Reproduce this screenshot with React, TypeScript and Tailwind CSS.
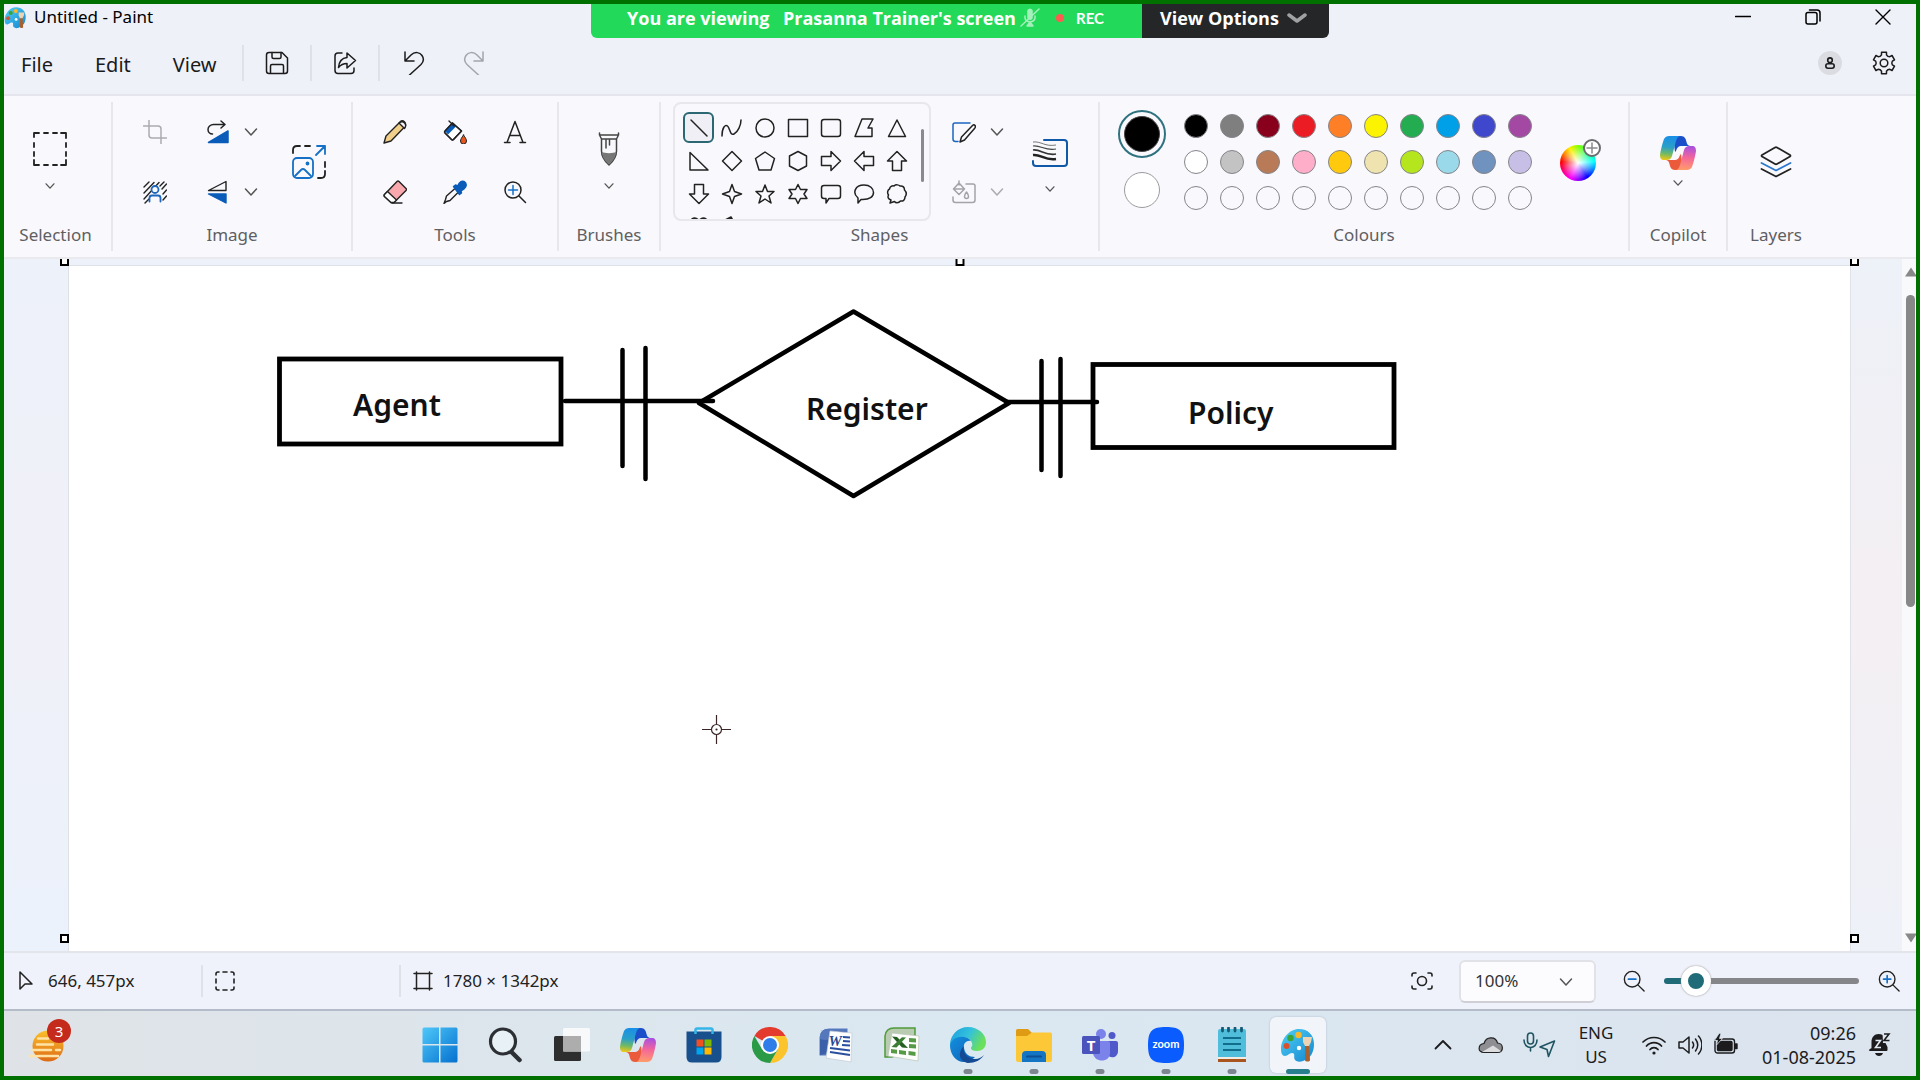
import React from "react";

type P = { children: React.ReactNode; size?: number; vb?: string; cls?: string; sw?: number };

function Icon({ children, size = 24, vb = "0 0 24 24", cls = "", sw = 1.3 }: P) {
  return (
    <svg
      width={size}
      height={size}
      viewBox={vb}
      fill="none"
      stroke="currentColor"
      strokeWidth={sw}
      strokeLinecap="round"
      strokeLinejoin="round"
      className={"shrink-0 " + cls}
      aria-hidden="true"
    >
      {children}
    </svg>
  );
}

function Chevron({ small = false, cls = "text-[#555]" }: { small?: boolean; cls?: string }) {
  return (
    <Icon size={small ? 10 : 14} vb="0 0 14 14" sw={small ? 1.9 : 1.5} cls={cls}>
      <path d="M1.5 4l5.5 6 5.5-6" />
    </Icon>
  );
}

function Btn({ label, cls, children }: { label: string; cls: string; children: React.ReactNode }) {
  return (
    <button type="button" aria-label={label} className={"flex shrink-0 items-center justify-center " + cls}>
      {children}
    </button>
  );
}

function Group({ label, cls, labelCls = "", children }: { label: string; cls: string; labelCls?: string; children: React.ReactNode }) {
  return (
    <section aria-label={label} className={"my-1.5 flex shrink-0 flex-col border-r-2 border-[#e7e7ec] pb-1 " + cls}>
      <div className="flex h-[120px]">{children}</div>
      <div className={"mt-px text-center text-[17px] leading-6 text-[#5f5f63] " + labelCls}>{label}</div>
    </section>
  );
}

function PaintLogo({ size }: { size: number }) {
  return (
    <svg width={size} height={size} viewBox="0 0 36 36" aria-hidden="true" className="shrink-0">
      <defs>
        <linearGradient id="pal" x1="0" y1="0" x2="1" y2="1">
          <stop offset="0" stopColor="#4fd0f5" />
          <stop offset="1" stopColor="#1486d0" />
        </linearGradient>
      </defs>
      <path
        d="M19 2C9 2 1 12 1 22c0 4 1 7 4 7s4-3 7-3c4 0 1 4 3 7 2 2 5 2 8 1 8-3 11-9 11-17C34 8 28 2 19 2z"
        fill="url(#pal)"
      />
      <circle cx="19" cy="21" r="2.2" fill="#fff" />
      <circle cx="6.5" cy="19" r="3" fill="#d9512c" />
      <circle cx="10.5" cy="11" r="3.2" fill="#3aa537" />
      <circle cx="18.5" cy="8" r="3.2" fill="#f7b82d" />
      <path d="M25 18h4l1 15c0 2-5 2-5 0z" fill="#a8602c" />
      <path d="M23 10h9l-1 5-2 4h-4l-2-4z" fill="#ecd3b4" />
    </svg>
  );
}

function Copilot({ id, w, h }: { id: string; w: number; h: number }) {
  const body = "M9 0h12c-3 0-4 2-5 5l-4 15c-1 3-3 4-5 4H4c-3 0-4-2-4-5C1 12 3 6 4 3 5 1 7 0 9 0z";
  const fold = "M13 0h8c3.5 0 5 3 5.5 6 .5 2.5 1.5 3.5 3.5 4h-8c-4 0-5 2-6 5l-1 1z";
  return (
    <svg width={w} height={h} viewBox="0 0 36 34" aria-hidden="true" className="shrink-0">
      <defs>
        <linearGradient id={id + "a"} x1="0.3" y1="0" x2="0.2" y2="1">
          <stop offset="0" stopColor="#1a8fe6" />
          <stop offset="0.45" stopColor="#2aa0c8" />
          <stop offset="0.72" stopColor="#6cb86a" />
          <stop offset="1" stopColor="#f2c813" />
        </linearGradient>
        <linearGradient id={id + "c"} x1="0.3" y1="0" x2="0.2" y2="1">
          <stop offset="0" stopColor="#ff9a6c" />
          <stop offset="0.5" stopColor="#f4669a" />
          <stop offset="1" stopColor="#a44fe4" />
        </linearGradient>
      </defs>
      <path d={fold} fill="#1b4fc9" />
      <path d={fold} fill="#ec5a3c" transform="rotate(180 18 17)" />
      <path d={body} fill={"url(#" + id + "a)"} />
      <path d={body} fill={"url(#" + id + "c)"} transform="rotate(180 18 17)" />
    </svg>
  );
}

function gearPath() {
  let d = "";
  const pt = (deg: number, r: number) => {
    const a = ((deg - 90) * Math.PI) / 180;
    return (12 + r * Math.cos(a)).toFixed(2) + " " + (12 + r * Math.sin(a)).toFixed(2);
  };
  for (let i = 0; i < 6; i++) {
    const a = i * 60;
    d += (i ? "L" : "M") + pt(a - 13, 11) + "L" + pt(a + 13, 11) + "L" + pt(a + 17, 8.6);
    d += "Q" + pt(a + 30, 7.2) + " " + pt(a + 43, 8.6);
  }
  return d + "Z";
}

const shapes: { name: string; d: string }[] = [
  { name: "Line", d: "M3 3l16 16" },
  { name: "Curve", d: "M1 19c0-8 3-12 5.5-10C9 11 9 19 13 17c4-2 7-9 7-14" },
  { name: "Oval", d: "M20 11a9 9 0 1 1-18 0 9 9 0 0 1 18 0z" },
  { name: "Rectangle", d: "M1.5 2.5h19v17h-19z" },
  { name: "Rounded rectangle", d: "M4 2.5h14q2.5 0 2.5 2.5v12q0 2.5-2.5 2.5H4q-2.5 0-2.5-2.5V5Q1.5 2.5 4 2.5z" },
  { name: "Polygon", d: "M9 2h11l-5 9h4v8.5H2z" },
  { name: "Triangle", d: "M11 3l8.5 16.5h-17z" },
  { name: "Right-angled triangle", d: "M2 2.5L20 20H2z" },
  { name: "Diamond", d: "M11 1.5l9.5 9.5-9.5 9.5L1.5 11z" },
  { name: "Pentagon", d: "M11 2l9.5 6.5L17 20H5L1.5 8.5z" },
  { name: "Hexagon", d: "M11 1.5l8.5 4.5v10L11 20.5 2.5 16V6z" },
  { name: "Right arrow", d: "M1.5 6.5H11v-5l9.5 9.5-9.5 9.5v-5H1.5z" },
  { name: "Left arrow", d: "M20.5 6.5H11v-5L1.5 11l9.5 9.5v-5h9.5z" },
  { name: "Up arrow", d: "M6.5 20.5V11h-5L11 1.5l9.5 9.5h-5v9.5z" },
  { name: "Down arrow", d: "M6.5 1.5V11h-5l9.5 9.5L20.5 11h-5V1.5z" },
  { name: "Four-point star", d: "M11 1.5l2.5 7 7 2.5-7 2.5-2.5 7-2.5-7-7-2.5 7-2.5z" },
  { name: "Five-point star", d: "M11 2l2.5 6.5h6.5l-5 4.5 2 7-6-4-6 4 2-7-5-4.5h6.5z" },
  { name: "Six-point star", d: "M11 1.5l2.5 5h6.5L17 11l3 4.5h-6.5l-2.5 5-2.5-5H2L5 11 2 6.5h6.5z" },
  { name: "Rounded callout", d: "M4 2.5h14q2.5 0 2.5 2.5v8q0 2.5-2.5 2.5H9L6 20v-4.5H4Q1.5 15.5 1.5 13V5Q1.5 2.5 4 2.5z" },
  { name: "Oval callout", d: "M8 16.5l-3 3.5v-5C-1 10 2 2 11 2c6 0 9.5 3.5 9.5 7.5S17 17 8 16.5z" },
  { name: "Cloud callout", d: "M8 3c2-2 5-1 6 0 3-.5 4.5 1.5 4.5 4 2 2 2 5 .5 7 0 3-2 4.5-4.5 4-2 2.5-5 2-6 .5L4 20l1-3c-3-1-3.5-3-2.5-5-1.5-2-1-5 1-6C4 3.5 6 2.5 8 3z" },
  { name: "Heart", d: "M11 20L2.5 11C-1 5 6-1 11 4.5 16-1 23 5 19.5 11z" },
  { name: "Lightning", d: "M2 5l8-4 3 5-2 1 5 5-2 1 6 7-10-5 2-1-6-5 2-1z" },
];

const row1 = ["bg-black", "bg-[#7f7f7f]", "bg-[#88001b]", "bg-[#ec1c24]", "bg-[#ff7f27]", "bg-[#fbf300]", "bg-[#23ad50]", "bg-[#00a0e8]", "bg-[#3f48cc]", "bg-[#a349a4]"];
const row2 = ["bg-white", "bg-[#c3c3c3]", "bg-[#b97a57]", "bg-[#ffaec9]", "bg-[#ffc90e]", "bg-[#efe4b0]", "bg-[#b5e61d]", "bg-[#99d9ea]", "bg-[#7092be]", "bg-[#c8bfe7]"];
const row3 = Array<string>(10).fill("bg-transparent");
const palette = [...row1, ...row2, ...row3];

function TitleBar() {
  return (
    <header className="flex h-7 items-center pb-0.5">
      <div className="w-[30px]">
        <PaintLogo size={23} />
      </div>
      <h1 className="flex-1 text-[17px] leading-6 text-black">Untitled - Paint</h1>
      <Btn label="Minimise" cls="h-6 w-[66px] text-black">
        <Icon size={16} vb="0 0 16 16"><path d="M.5 7.5h15" /></Icon>
      </Btn>
      <Btn label="Restore" cls="h-6 w-[74px] text-black">
        <Icon size={16} vb="0 0 16 16" sw={1.5}>
          <rect x="1" y="3.5" width="11" height="11.5" rx="2" />
          <path d="M4.5 1h7.5q3 0 3 3v8" />
        </Icon>
      </Btn>
      <Btn label="Close" cls="h-6 w-[66px] text-black">
        <Icon size={16} vb="0 0 16 16" sw={1.4}><path d="M1 1l14 14M15 1L1 15" /></Icon>
      </Btn>
    </header>
  );
}

function MenuBar() {
  return (
    <nav className="flex h-[62px] items-center text-[#1b1b1b]">
      <div className="flex w-[238px] gap-[42px] pt-1 pl-[17px] text-[20px] leading-7">
        <button type="button">File</button>
        <button type="button">Edit</button>
        <button type="button">View</button>
      </div>
      <div className="h-9 w-0.5 bg-[#dfe1ea]" />
      <Btn label="Save" cls="h-10 w-[66px]">
        <Icon sw={1.5}>
          <path d="M4 1.5h13L22.5 7v13q0 2.5-2.5 2.5H4q-2.5 0-2.5-2.5V4Q1.5 1.5 4 1.5z" />
          <path d="M7 1.5V6q0 1.5 1.5 1.5h6Q16 7.5 16 6V1.5M5.5 22v-7q0-1.5 1.5-1.5h10q1.5 0 1.5 1.5v7" />
        </Icon>
      </Btn>
      <div className="h-9 w-0.5 bg-[#dfe1ea]" />
      <Btn label="Share" cls="h-10 w-[66px]">
        <Icon sw={1.5}>
          <path d="M9 2H5Q2 2 2 5v14.5q0 3 3 3h13q3 0 3-3V17" />
          <path d="M14 2l8.5 7.5L14 17v-4.5c-4 0-6.5 1.5-8.5 4C6 11 9 7 14 6.5z" />
        </Icon>
      </Btn>
      <div className="h-9 w-0.5 bg-[#dfe1ea]" />
      <Btn label="Undo" cls="ml-1 h-10 w-[60px]">
        <Icon sw={1.5}><path d="M3 1v9h9M3 10l6-6c4-4 9-2.5 11 .5 2 3 1.5 6.5-1 9L7.5 24" /></Icon>
      </Btn>
      <Btn label="Redo" cls="h-10 w-[60px] text-[#a4a5ac]">
        <Icon sw={1.5}><path d="M21 1v9h-9M21 10l-6-6c-4-4-9-2.5-11 .5-2 3-1.5 6.5 1 9L16.5 24" /></Icon>
      </Btn>
      <div className="flex-1" />
      <Btn label="Account" cls="h-6 w-6 rounded-full bg-[#dadce2]">
        <Icon size={12} vb="0 0 12 12" sw={1.6}>
          <circle cx="6" cy="3.2" r="2.3" />
          <rect x="1.8" y="6.8" width="8.4" height="4.4" rx="2.2" />
        </Icon>
      </Btn>
      <Btn label="Settings" cls="mr-1.5 ml-4 h-10 w-[52px]">
        <Icon sw={1.5}>
          <path d={gearPath()} />
          <circle cx="12" cy="12" r="3.8" />
        </Icon>
      </Btn>
    </nav>
  );
}

function Ribbon() {
  return (
    <div className="flex border-y-2 border-t-[#e5e5ee] border-b-[#e9e9ee] bg-[#f9f8fc] text-[#222]">
      <Group label="Selection" cls="w-[109px]" labelCls="pr-1">
        <button type="button" aria-label="Selection" className="ml-4 flex w-[60px] flex-col items-center pt-[30px]">
          <Icon size={34} vb="0 0 34 34" sw={1.8}>
            <path d="M1 5V1h5M11 1h4M20 1h4M28 1h5v5M33 11v4M33 20v4M33 28v5h-5M24 33h-4M15 33h-4M6 33H1v-5M1 24v-4M1 15v-4" />
          </Icon>
          <span className="mt-[15px]"><Chevron small /></span>
        </button>
      </Group>

      <Group label="Image" cls="w-[240px]">
        <div className="ml-3 grid grid-rows-2 items-center">
          <Btn label="Crop" cls="h-10 w-[60px] text-[#aaabb0]">
            <Icon sw={1.5}><path d="M6 .5V15q0 3 3 3h14.5M.5 6H15q3 0 3 3v14.5" /></Icon>
          </Btn>
          <Btn label="Remove background" cls="h-10 w-[60px]">
            <Icon sw={1.4}>
              <path d="M1 7l5-5M1 13L11 2.5M1 19L16 2.5M2 23l4-4M17 6l4-4M19 9l4.5-5M20 14l3.5-4M20 20l3.5-4" />
              <g stroke="#1d66bd" strokeWidth="1.8" fill="#f9f8fc">
                <circle cx="12" cy="9.5" r="3.5" />
                <path d="M6.5 21.5V18q0-2.5 2.5-2.5h6q2.5 0 2.5 2.5v3.5" />
              </g>
            </Icon>
          </Btn>
        </div>
        <div className="ml-2 grid grid-rows-2 items-center">
          <Btn label="Rotate" cls="h-10 w-[50px]">
            <Icon sw={1.5}>
              <path d="M15 1l4 3.5L15 8M18.5 4.5H7.5C4.5 4.5 2 7 2 9.5S4 14 6.5 14" />
              <path d="M2.5 22.5L22 11v11.5z" fill="#0a5cb8" stroke="#0a5cb8" />
            </Icon>
          </Btn>
          <Btn label="Flip" cls="h-10 w-[50px]">
            <Icon sw={1.4}>
              <path d="M2.5 10.5L20 1.5v9z" />
              <path d="M2.5 14H20v9z" fill="#0a5cb8" stroke="#0a5cb8" />
            </Icon>
          </Btn>
        </div>
        <div className="grid grid-rows-2 items-center">
          <Btn label="Rotate options" cls="h-10 w-4"><Chevron /></Btn>
          <Btn label="Flip options" cls="h-10 w-4"><Chevron /></Btn>
        </div>
        <Btn label="Resize" cls="ml-6 h-[120px] w-[52px]">
          <Icon size={34} vb="0 0 34 34" sw={1.8}>
            <path d="M1 8V5q0-4 4-4h3M13 1h5M33 17v5M33 26v3q0 4-4 4h-3" />
            <g stroke="#1670c6">
              <path d="M25 1h8v8M33 1l-9 9" />
              <rect x="1" y="13" width="20" height="20" rx="4" />
              <path d="M3 31l6-6q2-2 4 0l6 6" />
              <circle cx="15.5" cy="18.5" r="1" />
            </g>
          </Icon>
        </Btn>
      </Group>

      <Group label="Tools" cls="w-[206px]">
        <div className="mx-auto grid grid-cols-3 grid-rows-2">
          <Btn label="Pencil" cls="h-[60px] w-[60px]">
            <Icon sw={1.4}>
              <path d="M1 23l2-7L17 2c3-3 7 1 5 4.5L8 21z" fill="#f0d08a" />
              <path d="M16 3l5.5 5.5c3-4-1-9-5.5-5.5z" fill="#f9f8fc" />
            </Icon>
          </Btn>
          <Btn label="Fill" cls="h-[60px] w-[60px]">
            <Icon sw={1.4}>
              <path d="M9.5 3L2 11q-1 1 0 2l6.5 6.5q1 1 2 0L18.5 11z" fill="#fff" />
              <path d="M9.5 3L2 11l3 3.5 8-8z" fill="#0a5cb8" stroke="none" />
              <path d="M9.5 3L2 11q-1 1 0 2l6.5 6.5q1 1 2 0L18.5 11z M6 1l5 5" />
              <path d="M20.5 15c2 3 3 4.5 3 6a3 3 0 0 1-6 0c0-1.5 1-3 3-6z" fill="#e8551f" strokeWidth="1" />
            </Icon>
          </Btn>
          <Btn label="Text" cls="h-[60px] w-[60px]">
            <Icon sw={1.5}><path d="M4 22.5L12 1.5l8 21M7 15.5h10M1.5 22.5h5.5M17 22.5h5.5" /></Icon>
          </Btn>
          <Btn label="Eraser" cls="h-[60px] w-[60px]">
            <Icon sw={1.4}>
              <path d="M1.5 14.5L14 1.5q1-1 2 0L23 8.5q1 1 0 2L11 22.5H8l-6.5-6q-.8-1 0-2z" fill="#f9a8ae" />
              <path d="M1.5 14.5l3-3 9 8.5-2.5 2.5H8l-6.5-6q-.8-1 0-2z" fill="#fff" />
              <path d="M9 23h10" />
            </Icon>
          </Btn>
          <Btn label="Colour picker" cls="h-[60px] w-[60px]">
            <Icon sw={1.4}>
              <path d="M12 8.5l3.5 3.5L7 20.5l-3.5 1L1 23.5l1.5-4 1-3.5z" />
              <path d="M10.5 6.5l2-1.5 2 1C17 1 19 .5 21 1.5c3 1.5 3 5 0 7.5l-3 2 .5 2-2 1.5z" fill="#0a5cb8" stroke="#0a5cb8" />
            </Icon>
          </Btn>
          <Btn label="Magnifier" cls="h-[60px] w-[60px]">
            <Icon sw={1.5}>
              <circle cx="10" cy="10" r="8" />
              <path d="M16 16l6.5 6.5" />
              <path d="M10 5.5v9M5.5 10h9" stroke="#1670c6" />
            </Icon>
          </Btn>
        </div>
      </Group>

      <Group label="Brushes" cls="w-[102px]">
        <button type="button" aria-label="Brushes" className="mx-auto flex w-[60px] flex-col items-center pt-[30px]">
          <Icon size={34} vb="0 0 34 34" sw={1.5} cls="text-[#444]">
            <path d="M7.5 1v2l2 4h15l2-4V1M7.5 3h19M9.5 7v12c0 6 3 10 7.5 14 4.5-4 7.5-8 7.5-14V7M14 8v8M17.5 8v5" />
            <path d="M10 20c2 1.5 12 1.5 14 0 0 5-3 9-7 12.5-4-3.5-7-7.5-7-12.5z" fill="#777" stroke="none" />
          </Icon>
          <span className="mt-[15px]"><Chevron small /></span>
        </button>
      </Group>

      <Group label="Shapes" cls="w-[439px]">
        <div className="ml-3 flex h-[119px] w-[258px] shrink-0 overflow-hidden rounded-lg border-2 border-[#e8e7ec] pt-[7px] pl-[7px]">
          <div className="grid h-min grid-cols-7">
            {shapes.map((s, i) => (
              <button
                key={s.name}
                type="button"
                aria-label={s.name}
                className={
                  i === 0
                    ? "m-px flex h-[31px] w-[31px] items-center justify-center rounded-md border-2 border-[#2b6873] bg-[#f0eff5]"
                    : "flex h-[33px] w-[33px] items-center justify-center"
                }
              >
                <Icon size={22} vb="0 0 22 22" sw={1.5}><path d={s.d} /></Icon>
              </button>
            ))}
          </div>
          <div className="mt-[18px] ml-2 h-[53px] w-[3px] shrink-0 rounded-full bg-[#8b8b8e]" />
        </div>
        <div className="ml-[9px] grid grid-rows-2 items-center">
          <Btn label="Shape outline" cls="h-10 w-12">
            <Icon sw={1.5}>
              <path d="M18 3H3Q1 3 1 5v14q0 2.5 2.5 2.5H6" stroke="#1d66bd" />
              <path d="M8 22l1.5-5L20.5 5.5q1.5-1.5 2.5 0t-.5 3L12.5 20z" />
            </Icon>
          </Btn>
          <Btn label="Shape fill" cls="h-10 w-12 text-[#a3a3a8]">
            <Icon sw={1.5}>
              <path d="M7 1v4M7 3L1.5 9 7 14.5 12.5 9zM1.5 9h11M1 17v3q0 2.5 2.5 2.5h17q2.5 0 2.5-2.5V6q0-2-2-2h-7" />
              <path d="M14.5 12c1.5 2 2 3 2 4.5a2 2 0 0 1-4 0c0-1.5.5-2.5 2-4.5z" />
            </Icon>
          </Btn>
        </div>
        <div className="grid grid-rows-2 items-center">
          <Btn label="Outline options" cls="h-10 w-[18px]"><Chevron /></Btn>
          <Btn label="Fill options" cls="h-10 w-[18px]"><Chevron cls="text-[#aaabb0]" /></Btn>
        </div>
        <button type="button" aria-label="Size" className="ml-4 flex w-[56px] flex-col items-center pt-8">
          <svg width="36" height="36" viewBox="0 0 36 36" fill="none" aria-hidden="true">
            <path d="M12 6h20q3 0 3 3v20q0 3-3 3H4q-3 0-3-3v-2" stroke="#1058a8" strokeWidth="2" strokeLinecap="round" />
            <path d="M1 8c8-1 12 5 23 3" stroke="#555" strokeWidth="0.8" />
            <path d="M1 12c8-1 12 5 23 3" stroke="#444" strokeWidth="1.2" />
            <path d="M1 16c8-1 12 6 23 4" stroke="#333" strokeWidth="1.7" />
            <path d="M1 21c8-1 12 6 23 4" stroke="#222" strokeWidth="2.4" />
          </svg>
          <span className="mt-3.5"><Chevron small /></span>
        </button>
      </Group>

      <Group label="Colours" cls="w-[530px]">
        <div className="ml-[18px] flex w-12 shrink-0 flex-col items-center gap-3.5 pt-2">
          <button type="button" aria-label="Colour 1" className="h-12 w-12 rounded-full border-2 border-[#2f7280] p-1">
            <span className="block h-9 w-9 rounded-full border border-[#444] bg-black" />
          </button>
          <button type="button" aria-label="Colour 2" className="h-9 w-9 rounded-full border border-[#9b9b9f] bg-white" />
        </div>
        <div className="ml-[18px] grid h-min shrink-0 grid-cols-10 gap-3 pt-3">
          {palette.map((c, i) => (
            <button key={i} type="button" aria-label={"Swatch " + (i + 1)} className={"h-6 w-6 rounded-full border border-[#85858a] " + c} />
          ))}
        </div>
        <button type="button" aria-label="Edit colours" className="relative mt-[43px] ml-7 h-9 w-9 rounded-full bg-[conic-gradient(#8f0,#0f8_50deg,#0ff_85deg,#00f_145deg,#f0f_205deg,#f00_275deg,#ff8a00_305deg,#fe0_330deg,#8f0)]">
          <span className="block h-9 w-9 rounded-full bg-[radial-gradient(circle,#fff,transparent_65%)]" />
          <span className="absolute -top-1.5 left-[23px] flex h-[18px] w-[18px] items-center justify-center rounded-full border-2 border-[#6c6c70] bg-white text-[#8a8a8e]">
            <Icon size={12} vb="0 0 12 12" sw={1.5}><path d="M6 1v10M1 6h10" /></Icon>
          </span>
        </button>
      </Group>

      <Group label="Copilot" cls="w-[98px]">
        <button type="button" aria-label="Copilot" className="mx-auto flex w-[60px] flex-col items-center pt-[34px]">
          <Copilot id="rib" w={36} h={34} />
          <span className="mt-2"><Chevron small /></span>
        </button>
      </Group>

      <Group label="Layers" cls="w-[98px] border-transparent">
        <Btn label="Layers" cls="mx-auto h-[120px] w-[60px]">
          <Icon size={32} vb="0 0 32 32" sw={1.8}>
            <path d="M15 1.5q1-.5 2 0L30 9q1 .7 0 1.5L17 18q-1 .5-2 0L2 10.5Q1 9.7 2 9z" />
            <path d="M1.5 17L16 24.5 30.5 17" stroke="#2b77cc" />
            <path d="M1.5 23L16 30.5 30.5 23" />
          </Icon>
        </Btn>
      </Group>
    </div>
  );
}

const handle = "absolute h-[9px] w-[9px] border-2 border-black bg-white";

function Workspace() {
  return (
    <main className="flex flex-1 overflow-hidden bg-[#edf1f9]">
      <div className="w-[64px] shrink-0 bg-linear-to-b from-[#edf1f9] via-[#f0f0f8] to-[#ebf2fb]" />
      <div className="relative mt-1.5 flex-1 border-x border-t border-[#dfe1e8] bg-white">
        <span className={handle + " -top-[9px] -left-[9px]"} />
        <span className={handle + " -top-[9px] left-1/2 -translate-x-1/2"} />
        <span className={handle + " -top-[9px] -right-[9px]"} />
        <span className={handle + " bottom-2 -left-[9px]"} />
        <span className={handle + " -right-[9px] bottom-2"} />
        <svg className="absolute top-0 left-0 h-full w-full" fill="none" stroke="#000" strokeWidth="5" strokeLinecap="round" role="img" aria-label="Agent Register Policy diagram">
          <g transform="translate(-69 -266)">
            <rect x="279.5" y="359" width="281.500" height="85" strokeWidth="4.800" />
            <rect x="1093" y="364.500" width="301" height="83" strokeWidth="4.800" />
            <path d="M853.5 311.5L699 403l154.5 93L1009 403z" strokeWidth="4.500" strokeLinejoin="round" />
            <path d="M565 401H713M1006 402h91" strokeWidth="4.500" />
            <path d="M622.5 350v116M645.5 348v131M1041.5 361v109M1060.5 359v117" strokeWidth="4.500" />
            <g stroke="none" fill="#111" fontSize="30" fontWeight="600">
              <text x="353" y="416">Agent</text>
              <text x="806" y="420">Register</text>
              <text x="1188" y="424">Policy</text>
            </g>
            <g stroke="#3a2626" strokeWidth="1.200" strokeLinecap="butt">
              <path d="M702 729.5h9M722 729.5h9M716.5 715v9M716.5 735v9" />
              <circle cx="716.5" cy="729.5" r="5" />
              <circle cx="716.5" cy="729.5" r="0.5" />
            </g>
          </g>
        </svg>
      </div>
      <div className="w-[51px] shrink-0 bg-linear-to-b from-[#edf1f8] via-[#f4eff2] to-[#eef1f8]" />
      <div className="flex w-[14px] shrink-0 flex-col items-center overflow-hidden bg-[#f9f8fb] pt-2 pb-2 pl-[3px]">
        <svg width="12" height="10" viewBox="0 0 12 10" className="shrink-0" aria-hidden="true"><path d="M6 .5L12 9.5H0z" fill="#888" /></svg>
        <div className="mt-[18px] h-[312px] w-[9px] rounded-full bg-[#888]" />
        <div className="flex-1" />
        <svg width="12" height="10" viewBox="0 0 12 10" className="shrink-0" aria-hidden="true"><path d="M6 9.5L12 .5H0z" fill="#888" /></svg>
      </div>
    </main>
  );
}

function StatusBar() {
  return (
    <footer className="flex h-[58px] items-center border-t-2 border-[#e4e5ea] bg-[#eff2fa] text-[17px] leading-6 text-[#222]">
      <div className="flex w-[197px] items-center gap-3 pl-3">
        <Icon size={20} vb="0 0 20 20" sw={1.5}><path d="M4 1v17l5-5h7z" /></Icon>
        <span>646, 457px</span>
      </div>
      <div className="h-8 w-0.5 bg-[#dfe1e9]" />
      <div className="w-[196px] pl-3">
        <Icon size={20} vb="0 0 20 20" sw={1.6}>
          <path d="M1 4V3q0-2 2-2h1M8 1h4M16 1h1q2 0 2 2v1M19 8v4M19 16v1q0 2-2 2h-1M12 19H8M4 19H3q-2 0-2-2v-1M1 12V8" />
        </Icon>
      </div>
      <div className="h-8 w-0.5 bg-[#dfe1e9]" />
      <div className="flex flex-1 items-center gap-2.5 pl-3">
        <Icon size={20} vb="0 0 20 20" sw={1.5}><path d="M3.5 1v18M16.5 1v18M1 2.5h18M1 17.5h18" /></Icon>
        <span>1780 × 1342px</span>
      </div>
      <Btn label="Fit to window" cls="h-10 w-10">
        <Icon size={22} vb="0 0 22 22" sw={1.6}>
          <path d="M1 6V5q0-2 2-2h2M17 3h2q2 0 2 2v1M21 16v1q0 2-2 2h-2M5 19H3q-2 0-2-2v-1" />
          <circle cx="11" cy="11" r="4.5" />
        </Icon>
      </Btn>
      <div className="relative ml-[17px]">
        <select aria-label="Zoom level" defaultValue="100%" className="h-[43px] w-[137px] appearance-none rounded-md border-2 border-[#e1e2e8] border-b-[#cfd0d6] bg-[#fcfcfe] pl-3.5 text-[17px] text-[#333]">
          <option>100%</option>
        </select>
        <span className="pointer-events-none absolute top-[15px] right-[23px]"><Chevron /></span>
      </div>
      <Btn label="Zoom out" cls="ml-4 h-10 w-11">
        <Icon size={22} sw={1.5}><circle cx="10" cy="10" r="8.5" /><path d="M16.5 16.5l6.5 6.5" /><path d="M6 10h8" stroke="#1670c6" strokeWidth="2" /></Icon>
      </Btn>
      <input
        type="range"
        aria-label="Zoom"
        min={0}
        max={100}
        defaultValue={10}
        className="ml-2 h-1.5 w-[195px] appearance-none rounded-full bg-[linear-gradient(to_right,#1f6b78_16%,#85868a_16%)] [&::-webkit-slider-thumb]:h-[30px] [&::-webkit-slider-thumb]:w-[30px] [&::-webkit-slider-thumb]:appearance-none [&::-webkit-slider-thumb]:rounded-full [&::-webkit-slider-thumb]:border-[7px] [&::-webkit-slider-thumb]:border-white [&::-webkit-slider-thumb]:bg-[#1f6b78] [&::-webkit-slider-thumb]:shadow-[0_0_2px_#888]"
      />
      <Btn label="Zoom in" cls="mr-[5px] ml-2 h-10 w-11">
        <Icon size={22} sw={1.5}><circle cx="10" cy="10" r="8.5" /><path d="M16.5 16.5l6.5 6.5" /><path d="M6 10h8M10 6v8" stroke="#1670c6" strokeWidth="1.8" /></Icon>
      </Btn>
    </footer>
  );
}

function AppIcon({ children }: { children: React.ReactNode }) {
  return <svg width="36" height="36" viewBox="0 0 36 36" aria-hidden="true">{children}</svg>;
}

const apps: { name: string; open?: boolean; active?: boolean; icon: React.ReactNode }[] = [
  {
    name: "Start",
    icon: (
      <AppIcon>
        <defs><linearGradient id="win" x1="0" y1="0" x2="1" y2="1"><stop offset="0" stopColor="#4fc8fa" /><stop offset="1" stopColor="#0470ce" /></linearGradient></defs>
        <path d="M2 .5h15v16.500H.5V2Q.5.5 2 .5zM18.5.5H34q1.5 0 1.5 1.5v15h-17zM.5 18.5H17v17H2q-1.5 0-1.5-1.5zM18.5 18.5h17V34q0 1.5-1.5 1.5H18.5z" fill="url(#win)" />
      </AppIcon>
    ),
  },
  {
    name: "Search",
    icon: (
      <AppIcon>
        <circle cx="15" cy="14.5" r="12.5" fill="#e8f1f6" stroke="#2c2f33" strokeWidth="3.2" />
        <path d="M23.5 25l8 8" stroke="#2c2f33" strokeWidth="4.5" strokeLinecap="round" />
      </AppIcon>
    ),
  },
  {
    name: "Task view",
    icon: (
      <AppIcon>
        <rect x="0" y="9" width="27" height="25" rx="1.5" fill="#2e2e2e" />
        <rect x="9" y="1" width="27" height="23.5" rx="1.5" fill="#f8f9fa" />
        <path d="M9 9h18v15.500H9z" fill="#adadad" />
      </AppIcon>
    ),
  },
  { name: "Copilot", icon: <Copilot id="bar" w={36} h={34} /> },
  {
    name: "Store",
    icon: (
      <AppIcon>
        <path d="M9.5 7V3q0-1.5 1.5-1.5h14q1.500 0 1.500 1.500v4" stroke="#35b5e8" strokeWidth="2.5" fill="none" />
        <path d="M.5 4.5h35V30q0 5.5-5.5 5.5H6Q.5 35.5.5 30z" fill="#17508c" />
        <path d="M9.5 4v3M26.5 4v3" stroke="#35b5e8" strokeWidth="2.5" />
        <path d="M10.5 12.5h7v7h-7z" fill="#f25022" /><path d="M18.5 12.5h7v7h-7z" fill="#7fba00" />
        <path d="M10.5 20.5h7v7h-7z" fill="#00a4ef" /><path d="M18.5 20.5h7v7h-7z" fill="#ffb900" />
      </AppIcon>
    ),
  },
  {
    name: "Chrome",
    icon: (
      <AppIcon>
        <path d="M18 18L2.4 9A18 18 0 0 1 33.6 9z" fill="#e33b2e" />
        <path d="M18 9h15.600A18 18 0 0 1 18 36l7.8-13.5z" fill="#fcc42c" />
        <path d="M10.2 22.5L2.4 9A18 18 0 0 0 18 36l7.8-13.5z" fill="#2a9a47" />
        <circle cx="18" cy="18" r="9" fill="#fff" /><circle cx="18" cy="18" r="7" fill="#2f7de9" />
      </AppIcon>
    ),
  },
  {
    name: "Word",
    icon: (
      <AppIcon>
        <path d="M1 29V10Q2 1 11 1h19v20L8 29z" fill="#5478bb" stroke="#dfe8f5" />
        <path d="M2 28V12Q14 16 20 4l8 1v16z" fill="#2b4f9c" fillOpacity="0.6" />
        <path d="M12 4l22 2-1 29-25-4z" fill="#fdfdfe" stroke="#c3cad6" strokeWidth="0.7" />
        <path d="M25 10l7 .5M25 14l7 .5M24 18l8 .5M12 21l20 2.500M12 25l20 3" stroke="#2a4f9f" strokeWidth="2.2" />
        <text x="10.5" y="19" fontSize="15" fontWeight="700" fontStyle="italic" fontFamily="Liberation Serif, serif" fill="#27498f">W</text>
      </AppIcon>
    ),
  },
  {
    name: "Excel",
    icon: (
      <AppIcon>
        <path d="M1 30V9Q2 1 10 1h21v20L8 30z" fill="#b9cbb0" stroke="#4f9a3a" strokeWidth="1.5" />
        <path d="M8 6l27 3-1 25-30-5z" fill="#fdfefc" stroke="#b9c4b5" strokeWidth="0.7" />
        <path d="M25 11l7 .6v4l-7-.5zM25 17l7 .6v4l-7-.6zM7 22l6 .8v4l-6-.8zM15 23l7 .9v4l-7-.9zM24.5 24l7 .9v4l-7-.9z" fill="#569a45" />
        <path d="M8 9.5l5 .5 11 11-6-.5z" fill="#245f22" /><path d="M22 10.5l-4-.3L7.5 20l5 .4z" fill="#3a7d33" />
      </AppIcon>
    ),
  },
  {
    name: "Edge",
    open: true,
    icon: (
      <AppIcon>
        <defs>
          <linearGradient id="eg" x1="0" y1="0" x2="1" y2="0.4"><stop offset="0" stopColor="#1b9de0" /><stop offset="0.55" stopColor="#33c1dc" /><stop offset="1" stopColor="#6be05a" /></linearGradient>
          <linearGradient id="eb" x1="0" y1="0" x2="1" y2="1"><stop offset="0" stopColor="#1490df" /><stop offset="1" stopColor="#0d5fb5" /></linearGradient>
        </defs>
        <path d="M0 18C0 8 8 0 18 0s18 7 18 15c0 6-4 9-9 9-4 0-6-1-6-3 0-1 2-2 1-5-2-7-14-9-22 2z" fill="url(#eg)" />
        <path d="M0 18C2 9 16 7 21 14c-4-1-8 2-7 7 1 6 5 9 11 9-5 5-12 6-16 4C3 31 0 25 0 18z" fill="url(#eb)" />
        <path d="M14 19c-2 6 3 13 11 13 4 0 7-2 9-4-3 5-9 8-16 8-7-1-12-9-4-17z" fill="#144a94" />
      </AppIcon>
    ),
  },
  {
    name: "File Explorer",
    open: true,
    icon: (
      <AppIcon>
        <path d="M0 3.5Q0 2 1.5 2H12l4 4v5H0z" fill="#e09b14" />
        <path d="M0 9h11l5-3.500h18.500Q36 5.5 36 7v26q0 2-2 2H2q-2 0-2-2z" fill="#fcc838" />
        <path d="M6 35v-7q0-4 4-4h16q4 0 4 4v7z" fill="#1475c4" />
        <path d="M11 29.5h14" stroke="#0d4f92" strokeWidth="2" strokeLinecap="round" />
      </AppIcon>
    ),
  },
  {
    name: "Teams",
    open: true,
    icon: (
      <AppIcon>
        <circle cx="19" cy="7" r="5" fill="#7b83eb" /><circle cx="30" cy="8.5" r="3.5" fill="#5059c9" />
        <path d="M25 14h9q2 0 2 2v8c0 8-10 8-11 2z" fill="#5059c9" />
        <path d="M11 14h15q2 0 2 2v10c0 10-16 10-17 0z" fill="#7b83eb" />
        <rect x="0" y="9" width="18" height="18" rx="1.5" fill="#4b53bc" />
        <text x="9" y="23.5" textAnchor="middle" fontSize="15" fontWeight="700" fill="#fff">T</text>
      </AppIcon>
    ),
  },
  {
    name: "Zoom",
    open: true,
    icon: (
      <AppIcon>
        <path d="M18 0c14 0 18 4 18 18s-4 18-18 18S0 32 0 18 4 0 18 0z" fill="#0b5cff" />
        <text x="18" y="21" textAnchor="middle" fontSize="11" fontWeight="700" fontFamily="Lato, sans-serif" fill="#fff">zoom</text>
      </AppIcon>
    ),
  },
  {
    name: "Notepad",
    open: true,
    icon: (
      <AppIcon>
        <path d="M4 31h28v4H4z" fill="#a8551e" /><path d="M4 28h28v4H4z" fill="#f3ece4" />
        <path d="M4 4q0-2 2-2h24q2 0 2 2v26H4z" fill="#50bedb" />
        <path d="M9 11h18M9 17h18M9 23h18" stroke="#106d8c" strokeWidth="2" />
        <path d="M8.5 1v3M14.5 1v3M21 1v3M27.5 1v3" stroke="#155a74" strokeWidth="2.8" strokeLinecap="round" />
      </AppIcon>
    ),
  },
  { name: "Paint", open: true, active: true, icon: <PaintLogo size={36} /> },
];

function Taskbar() {
  return (
    <div className="relative flex h-[67px] items-center justify-end border-t-2 border-[#b3bcc8] bg-linear-to-r from-[#dfe3e7] via-[#dae8f1] to-[#dce4ee] pt-0.5 text-[#1c1c1e]">
      <button type="button" aria-label="Widgets" className="relative mr-auto ml-6 h-11 w-11">
        <svg width="44" height="44" viewBox="0 0 44 44" aria-hidden="true">
          <defs><linearGradient id="sun" x1="0" y1="0" x2="0" y2="1"><stop offset="0" stopColor="#fbc02a" /><stop offset="1" stopColor="#dd6a17" /></linearGradient></defs>
          <circle cx="20" cy="23" r="15.5" fill="url(#sun)" />
          <path d="M10 15.5h10M9 21.5h16M4 27h19M28 27h4M10 33h20M2 33h6" stroke="#ffe2a4" strokeWidth="2.5" strokeLinecap="round" />
        </svg>
        <span className="absolute -top-1 left-[19px] h-6 w-6 rounded-full bg-[#c42b1c] text-center text-[15px] leading-6 text-white">3</span>
      </button>
      <div className="absolute inset-y-0 left-[408px] flex items-center gap-2.5 pt-[3px]">
        {apps.map((a) => (
          <button
            key={a.name}
            type="button"
            aria-label={a.name}
            className={"relative flex h-14 w-14 items-center justify-center rounded-md " + (a.active ? "bg-[#f1f5fa] shadow-[0_0_2px_#a9b4c0]" : "")}
          >
            {a.icon}
            {a.open && (
              <span className={"absolute -bottom-px left-1/2 h-[5px] -translate-x-1/2 rounded-full " + (a.active ? "w-6 bg-[#2a7f8e]" : "w-[9px] bg-[#7d868e]")} />
            )}
          </button>
        ))}
      </div>
      <Btn label="Hidden icons" cls="h-10 w-9"><Icon size={18} vb="0 0 18 18" sw={1.8}><path d="M1.5 12.5L9 5l7.5 7.5" /></Icon></Btn>
      <Btn label="OneDrive" cls="ml-4 h-10 w-7">
        <Icon size={26} vb="0 0 26 26" sw={1.2}>
          <path d="M6 20.5C-1 20.5 0 12 6 11.5 8 4 18 4 19.5 11c6 0 7 9.5 0 9.5z" fill="#8f8e93" stroke="#222" />
          <path d="M4 20L15 13.5l8 5.500q-1 1-3 1H6z" fill="#dcdcdf" stroke="none" />
        </Icon>
      </Btn>
      <Btn label="Microphone and location in use" cls="ml-[15px] h-10 w-10 text-[#1f5561]">
        <svg width="34" height="28" viewBox="0 0 34 28" fill="none" stroke="currentColor" strokeWidth="1.6" strokeLinejoin="round" strokeLinecap="round" aria-hidden="true">
          <rect x="4.5" y="2" width="6" height="11" rx="3" />
          <path d="M1 9c0 10 13 10 13 0M7.5 16.5V20" />
          <path d="M31.5 10L17 16l7 2.500 1.500 7z" />
        </svg>
      </Btn>
      <button type="button" aria-label="Language" className="ml-2.5 w-[52px] text-center text-[17px] leading-6">
        ENG
        <br />
        US
      </button>
      <button type="button" aria-label="Network, volume and battery" className="ml-4 flex h-10 items-center gap-3 px-1">
        <Icon sw={1.7}>
          <path d="M1 9C7 3 17 3 23 9M4.5 13c4-4.5 11-4.5 15 0M8 16.5c2-2.5 6-2.5 8 0" />
          <circle cx="12" cy="20" r="1.6" fill="currentColor" stroke="none" />
        </Icon>
        <Icon sw={1.5}>
          <path d="M1 9v6h4l6 5V4L5 9zM14.5 9c1.5 2 1.5 4 0 6M17.5 6c3 4 3 8 0 12M20.5 3c4.5 5 4.5 13 0 18" />
        </Icon>
        <Icon sw={1.4}>
          <rect x="1" y="6" width="19.5" height="14" rx="2.5" />
          <rect x="3.5" y="8.5" width="14.5" height="9" rx="1" fill="currentColor" />
          <path d="M21.5 11h1.500v4.500h-1.500z" fill="currentColor" />
          <path d="M5 .5L.5 7.500h3l-1 4.500 6-6.500H5.5l1.500-5z" fill="currentColor" stroke="#dae6ef" strokeWidth="0.8" />
        </Icon>
      </button>
      <button type="button" aria-label="Clock" className="ml-5 text-right text-[18px] leading-6">
        09:26
        <br />
        01-08-2025
      </button>
      <Btn label="Notifications" cls="mr-6 ml-3 h-10 w-6">
        <svg width="22" height="26" viewBox="0 0 22 26" aria-hidden="true">
          <path d="M2.5 17V10c0-5 3-8 7-8 3 0 5 1 6 3v4l3 6v3q0 1-1 1H1q-1 0-1-1 0-.5 2.5-2zM6 21h8c-1 4-7 4-8 0z" fill="#1c1c1e" />
          <path d="M6.5 8.5h5l-5 7h5.500" stroke="#e3eaf2" strokeWidth="1.6" fill="none" />
          <path d="M13.5 0H22v11h-8z" fill="#dde6ef" />
          <path d="M15 2h5l-5 6.500h5.500" stroke="#1c1c1e" strokeWidth="1.6" fill="none" />
        </svg>
      </Btn>
    </div>
  );
}

function ShareBanner() {
  return (
    <div className="absolute top-0 left-1/2 flex h-[38px] -translate-x-1/2 overflow-hidden rounded-b-md font-['Open_Sans','Noto_Sans',sans-serif] text-[18px] leading-6 font-bold text-white">
      <div className="flex w-[551px] items-center bg-[#23d959] pb-0.5 pl-9">
        <span className="w-[156px] shrink-0 whitespace-nowrap">You are viewing</span>
        <span className="w-[237px] shrink-0 whitespace-nowrap">Prasanna Trainer's screen</span>
        <Icon size={20} vb="0 0 20 20" sw={1.5} cls="text-[#a5efbc]">
          <path d="M8 2.5q2-2.500 4 0V10q-2 2.500-4 0zM7 18h6l-3-4z" fill="currentColor" />
          <path d="M5 8v2c1 5 9 5 10 0V8M1 18L19 1" />
        </Icon>
        <span className="ml-4 h-2 w-2 rounded-full bg-[#ff5a4f]" />
        <span className="ml-3 font-['Lato',sans-serif] text-[15px]">REC</span>
      </div>
      <button type="button" className="flex w-[187px] items-center gap-2 bg-[#242628] pb-0.5 pl-[18px] whitespace-nowrap">
        View Options
        <Icon size={20} vb="0 0 20 20" sw={3.5} cls="text-[#a0a1a3]"><path d="M2 7l8 6 8-6" /></Icon>
      </button>
    </div>
  );
}

export default function App() {
  return (
    <div className="relative flex min-h-screen w-full flex-col overflow-hidden border-4 border-[#007000] bg-[#eff1f9] font-['Noto_Sans','Open_Sans',sans-serif]">
      <TitleBar />
      <MenuBar />
      <Ribbon />
      <Workspace />
      <StatusBar />
      <Taskbar />
      <div className="absolute inset-x-0 -top-1 h-0">
        <ShareBanner />
      </div>
    </div>
  );
}
